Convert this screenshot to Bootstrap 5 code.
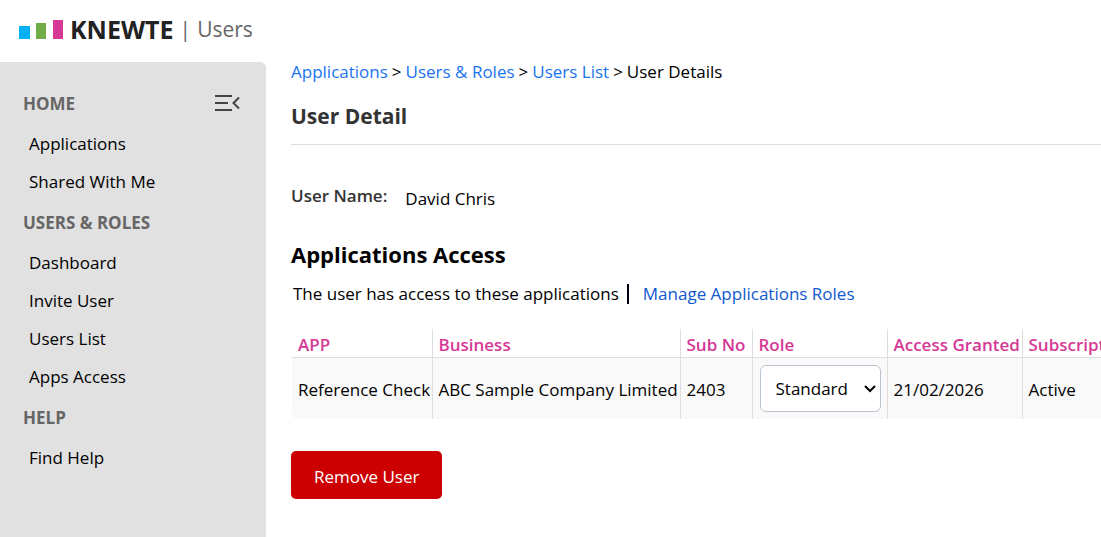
<!DOCTYPE html>
<html lang="en">
<head>
<meta charset="utf-8">
<meta name="viewport" content="width=device-width, initial-scale=1">
<title>KNEWTE | Users</title>
<link href="https://cdn.jsdelivr.net/npm/bootstrap@5.3.0/dist/css/bootstrap.min.css" rel="stylesheet">
<style>
  body { font-family: "Open Sans", "Noto Sans", sans-serif; font-size: 17px; line-height: 24px; color: #000; background: #fff; }
  a { text-decoration: none; }
  .topbar { height: 62px; padding: 0 18px 5px; }
  .brand-name { font-size: 25px; font-weight: 700; color: #222; margin-left: 7px; }
  .brand-section { font-size: 21px; color: #666; margin-left: 6px; }
  .sidebar { width: 266px; background: #e1e1e1; border-top-right-radius: 6px; padding: 30px 23px; }
  .side-title { font-size: 17px; font-weight: 700; color: #666; line-height: 24px; margin: 0; }
  .side-links { padding: 9px 6px 10px; }
  .side-links .nav-link { color: #000; padding: 7px 0; }
  .toggle-btn { line-height: 0; }
  .content { min-width: 0; padding: 0 0 30px 25px; }
  .crumbs { gap: 4px; line-height: 20px; }
  .crumbs a { color: #1a73f0; }
  .page-title { font-size: 21px; line-height: 32px; font-weight: 700; color: #333; margin: 18px 0 0; padding-bottom: 12px; border-bottom: 1px solid #ddd; }
  .field-row { margin-top: 39px; gap: 18px; }
  .field-name { font-weight: 600; color: #333; }
  .field-value { padding-top: 3px; }
  .section-title { font-size: 22px; line-height: 32px; font-weight: 700; margin: 27px 0 0; }
  .access-line { padding-left: 2px; margin-top: 12px; }
  .access-line a { color: #1058d0; }
  .rule { width: 2px; height: 20px; background: #001; margin: 0 14px 0 8px; }
  .access-table { table-layout: fixed; width: 910px; margin: 23px 0 0 1px; }
  .access-table > :not(caption) > * > * { padding: 10px 6px 6px; border: 0 solid #ddd; border-right-width: 1px; white-space: nowrap; color: #000; }
  .access-table > thead > tr > th { color: #d63896; font-weight: 600; padding: 4px 6px 0; border-bottom-width: 1px; }
  .access-table > tbody > tr > td { background: #f9f9f9; vertical-align: middle; height: 61px; }
  .access-table > tbody > tr > td:first-child { border-bottom-left-radius: 6px; }
  .access-table > tbody > tr > .role-cell { padding: 6px 6px 6px 7px; }
  .w-app { width: 140px; } .w-biz { width: 248px; } .w-sub { width: 72px; } .w-role { width: 135px; }
  .role-box { position: relative; }
  .role-select { width: 100%; height: 47px; padding: 2px 15px 0; border: 1px solid #b8c4d0; border-radius: 6px; background: #fff; color: #000; appearance: none; }
  .role-box svg { position: absolute; right: 4px; top: 19px; pointer-events: none; }
  .remove-btn, .remove-btn:hover { background: #c00; color: #fff; border: 0; border-radius: 5px; font-size: 17px; line-height: 24px; padding: 14px 23px 10px; margin-top: 32px; }
</style>
</head>
<body class="d-flex flex-column min-vh-100">
<header class="topbar d-flex align-items-center">
  <svg width="45" height="20" viewBox="0 0 45 20" aria-hidden="true">
    <path fill="#00b0f4" d="M1 7h11v13H1z"/><path fill="#70ad47" d="M18 4h10v16H18z"/><path fill="#d63895" d="M35 1h10v19H35z"/>
  </svg>
  <span class="brand-name">KNEWTE</span>
  <span class="brand-section">|</span>
  <span class="brand-section">Users</span>
</header>
<div class="d-flex flex-grow-1">
  <nav class="sidebar flex-shrink-0">
    <div class="d-flex justify-content-between align-items-center">
      <h2 class="side-title">HOME</h2>
      <button type="button" class="toggle-btn btn border-0 p-0" aria-label="Collapse menu">
        <svg width="28" height="20" viewBox="0 0 28 20" fill="none" stroke="#444" stroke-width="2"><path d="M0 2h17M0 9h13M0 16h17M24 3.500l-5.500 5.500 5.500 5.500"/></svg>
      </button>
    </div>
    <div class="side-links nav flex-column">
      <a class="nav-link" href="#">Applications</a>
      <a class="nav-link" href="#">Shared With Me</a>
    </div>
    <h2 class="side-title">USERS &amp; ROLES</h2>
    <div class="side-links nav flex-column">
      <a class="nav-link" href="#">Dashboard</a>
      <a class="nav-link" href="#">Invite User</a>
      <a class="nav-link" href="#">Users List</a>
      <a class="nav-link" href="#">Apps Access</a>
    </div>
    <h2 class="side-title">HELP</h2>
    <div class="side-links nav flex-column">
      <a class="nav-link" href="#">Find Help</a>
    </div>
  </nav>
  <main class="content flex-grow-1">
    <nav class="crumbs d-flex" aria-label="breadcrumb">
      <a href="#">Applications</a><span>&gt;</span><a href="#">Users &amp; Roles</a><span>&gt;</span><a href="#">Users List</a><span>&gt;</span><span>User Details</span>
    </nav>
    <h1 class="page-title">User Detail</h1>
    <div class="field-row d-flex">
      <span class="field-name">User Name:</span>
      <span class="field-value">David Chris</span>
    </div>
    <h2 class="section-title">Applications Access</h2>
    <div class="access-line d-flex align-items-center">
      <span>The user has access to these applications</span>
      <span class="rule"></span>
      <a href="#">Manage Applications Roles</a>
    </div>
    <div class="overflow-hidden">
    <table class="access-table table">
      <colgroup><col class="w-app"><col class="w-biz"><col class="w-sub"><col class="w-role"><col class="w-role"><col></colgroup>
      <thead><tr><th>APP</th><th>Business</th><th>Sub No</th><th>Role</th><th>Access Granted</th><th>Subscription Status</th></tr></thead>
      <tbody><tr>
        <td>Reference Check</td><td>ABC Sample Company Limited</td><td>2403</td>
        <td class="role-cell"><div class="role-box">
          <select class="role-select" aria-label="Role"><option>Standard</option></select>
          <svg width="14" height="10" viewBox="0 0 14 10" fill="none" stroke="#000" stroke-width="2"><path d="M2 2l5 5 5-5"/></svg>
        </div></td>
        <td>21/02/2026</td><td>Active</td>
      </tr></tbody>
    </table>
    </div>
    <button type="button" class="btn remove-btn">Remove User</button>
  </main>
</div>
<script src="https://cdn.jsdelivr.net/npm/bootstrap@5.3.0/dist/js/bootstrap.bundle.min.js"></script>
</body>
</html>
